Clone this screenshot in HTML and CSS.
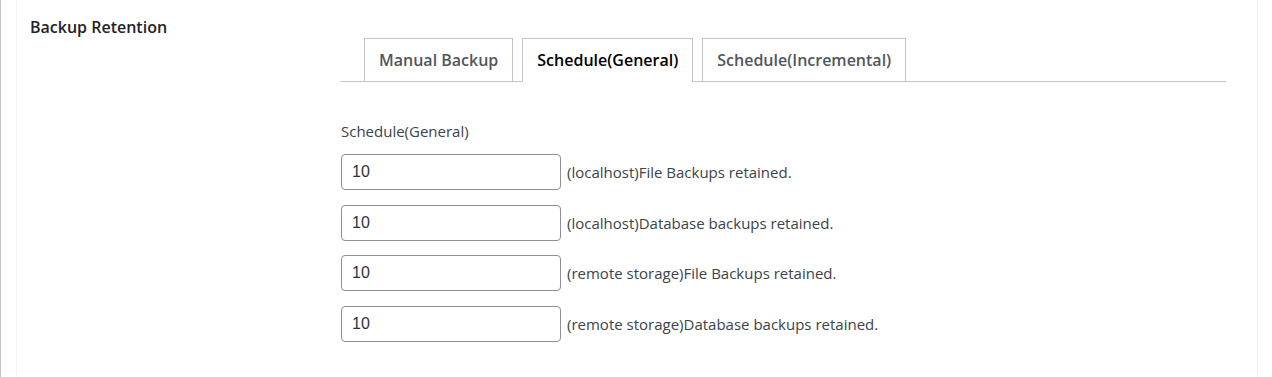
FILE: index.html
```html
<!DOCTYPE html>
<html lang="en">
<head>
  <meta charset="UTF-8">
  <title>Backup Retention</title>
  <link rel="stylesheet" href="styles.css">
</head>
<body>
  <div class="panel">
    <div class="setting-row">
      <div class="setting-title">Backup Retention</div>
      <div class="setting-body">
        <div class="nav-tabs">
          <a class="nav-tab">Manual Backup</a>
          <a class="nav-tab active">Schedule(General)</a>
          <a class="nav-tab">Schedule(Incremental)</a>
        </div>

        <div class="tab-content">
          <p class="group-title">Schedule(General)</p>
          <div class="field">
            <input type="text" value="10">
            <span>(localhost)File Backups retained.</span>
          </div>
          <div class="field">
            <input type="text" value="10">
            <span>(localhost)Database backups retained.</span>
          </div>
          <div class="field">
            <input type="text" value="10">
            <span>(remote storage)File Backups retained.</span>
          </div>
          <div class="field">
            <input type="text" value="10">
            <span>(remote storage)Database backups retained.</span>
          </div>
        </div>
      </div>
    </div>
  </div>
</body>
</html>
```

FILE: styles.css
```css
html, body {
  height: 100%;
}
body {
  margin: 0;
  border-left: 1px solid #c3c4c7;
  font-family: "Open Sans", sans-serif;
  color: #3c434a;
  background: #fff;
}
.panel {
  margin-left: 15px;
  width: 1242px;
  height: 100%;
  border-left: 1px solid #f3f3f4;
  border-right: 1px solid #f3f3f4;
  box-sizing: border-box;
}
.setting-row {
  display: flex;
}
.setting-title {
  width: 310px;
  padding: 16px 0 0 13px;
  font-size: 16px;
  font-weight: 600;
  color: #1d2327;
}
.setting-body {
  width: 886px;
  padding-top: 38px;
}
.nav-tabs {
  display: flex;
  gap: 9px;
  padding-left: 24px;
  border-bottom: 1px solid #c3c4c7;
}
.nav-tab {
  margin-bottom: -1px;
  padding: 0 14px;
  height: 42px;
  line-height: 42px;
  border: 1px solid #c3c4c7;
  border-bottom: none;
  font-size: 16px;
  font-weight: 600;
  color: #50575e;
  background: #fff;
}
.nav-tab.active {
  height: 43px;
  color: #000;
}
.tab-content {
  padding: 39px 0 0 1px;
}
.group-title {
  margin: 0 0 13px;
  font-size: 15px;
}
.field {
  display: flex;
  align-items: center;
  gap: 6px;
  margin-bottom: 14.7px;
  font-size: 15px;
}
.field input {
  width: 220px;
  height: 36px;
  box-sizing: border-box;
  padding: 0 10px;
  border: 1px solid #8c8f94;
  border-radius: 4px;
  font-family: "Liberation Sans", Arial, sans-serif;
  font-size: 16px;
  color: #2c3338;
}
```
